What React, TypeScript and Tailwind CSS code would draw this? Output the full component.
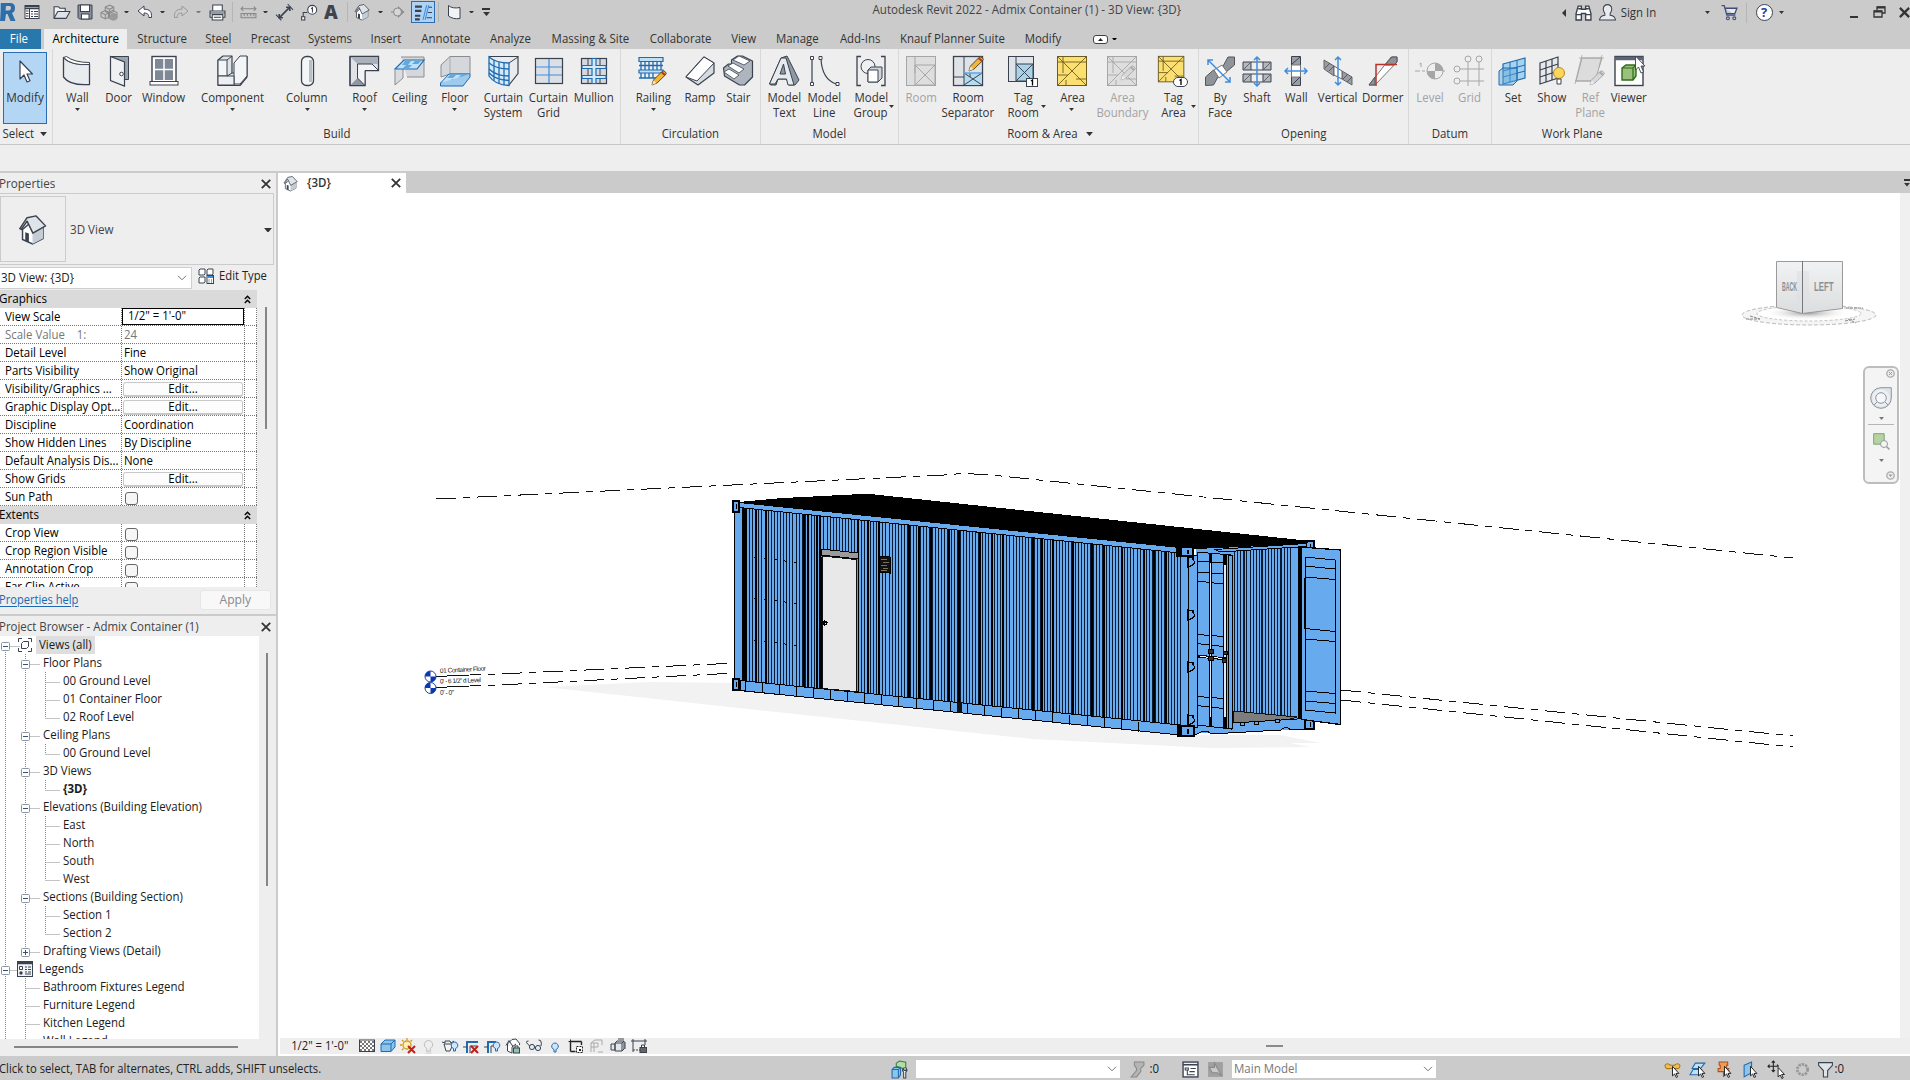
import React from "react";

type Item = [number, number, React.ReactNode];

const K = "#3a4250";
const B = "#1f6bb0";

/* Flow row whose children are centred on given positions along the bar. */
function Row({ items, from = 0, className = "" }: { items: Item[]; from?: number; className?: string }) {
  let cursor = from;
  return (
    <div className={"flex " + className}>
      {items.map(([c, w, node], i) => {
        const ml = c - w / 2 - cursor;
        cursor = c + w / 2;
        return (
          <div key={i} className="flex shrink-0 items-center justify-center whitespace-nowrap" style={{ marginLeft: ml, width: w }}>
            {node}
          </div>
        );
      })}
    </div>
  );
}

function Ico({ s = 32, vb = 32, children }: { s?: number; vb?: number; children: React.ReactNode }) {
  return (
    <svg width={s} height={s} viewBox={`0 0 ${vb} ${vb}`} fill="none" className="shrink-0 overflow-visible">
      {children}
    </svg>
  );
}

const Caret = ({ s = 6, c = "#333" }: { s?: number; c?: string }) => (
  <svg width={s} height={s / 1.7} viewBox="0 0 10 6" className="shrink-0">
    <path d="M0 0h10L5 6z" fill={c} />
  </svg>
);

const XIcon = ({ s = 10, w = 1.8 }: { s?: number; w?: number }) => (
  <svg width={s} height={s} viewBox="0 0 10 10" className="shrink-0">
    <path d="M.8.8l8.4 8.4M9.2.8L.8 9.2" stroke="#333" strokeWidth={w} fill="none" />
  </svg>
);

const Chevron = () => (
  <svg width="10" height="6" viewBox="0 0 10 6" className="shrink-0">
    <path d="M1 .8l4 4 4-4" stroke="#777" fill="none" />
  </svg>
);

const Sep = () => <div className="h-[20px] w-px bg-[#b5b5b5]" />;

/* ---------- quick access icons (16px) ---------- */
const House = ({ s = 16 }: { s?: number }) => (
  <Ico s={s} vb={16}>
    <path d="M2.500 8v5.500L8 16l5.800-3V7L9 2.500z" fill="#fff" stroke={K} strokeWidth=".8" />
    <path d="M8 9.500V16l5.800-3V7z" fill="#c4ccd5" />
    <path d="M1 7.500L5 1.500 10 .5 15.200 6l-7 4L5 3.400 1.800 8z" fill="#dfe4e9" stroke={K} strokeWidth=".8" strokeLinejoin="round" />
    <path d="M4 9.500l2 .7V15l-2-.9z" fill={K} />
  </Ico>
);

const qat: Item[] = [
  [8, 16, <Ico s={20} vb={20}><path d="M3 1h9q5 0 5 5 0 4-3 5l3.500 8h-5L9.500 12H8l-1 7H2z" fill="#2d6da8" /><path d="M8 4h3.500q1.800 0 1.500 2.200-.3 2.300-2.500 2.300H7.500z" fill="#cbcbcb" /><path d="M3 1L1 3v13l1 3z" fill="#7fb0dc" /></Ico>],
  [32, 16, <Ico s={16} vb={16}><rect x="1" y="1.500" width="14" height="13" fill="#fff" stroke={K} /><path d="M1 2.500h14M1 4.500h14" stroke={K} strokeWidth="1.500" /><path d="M5.500 5v9" stroke={K} /><path d="M2 7h2.500M2 9.500h2.500M2 12h2.500M7 7.500h2M10 7.500h4M7 10h2M10 10h4M7 12.500h2M10 12.500h4" stroke={K} /></Ico>],
  [61, 16, <Ico s={17} vb={16}><path d="M1 13.500V2.500h4l1.500 1.500h5v3" fill="#f0f2f4" stroke={K} /><path d="M1 13.500L4.500 7h11.500l-3.500 6.500z" fill="#dfe3e8" stroke={K} strokeLinejoin="round" /></Ico>],
  [85, 16, <Ico s={16} vb={16}><path d="M1 1h14v14H2.500L1 13.500z" fill="#8a919c" stroke={K} /><rect x="3.500" y="1" width="9" height="6.500" fill="#fff" stroke={K} /><rect x="4.500" y="10" width="7.500" height="5" fill="#fff" stroke={K} /></Ico>],
  [109, 16, <Ico s={17} vb={16}><path d="M8 1l4 2v4l-4 2-4-2V3zM4 6l4 2v4l-4 2-4-2V8zM11 6l4 2v5l-4 2-4-2V8z" fill="#c9c9c9" stroke="#8b8b8b" /><circle cx="12" cy="12" r="3.500" fill="#9a9a9a" /><path d="M0 8l4 2v4M4 10l4-2M4 3l4 2 4-2M8 5v4" stroke="#8b8b8b" /></Ico>],
  [126, 6, <Caret s={5} />],
  [145, 16, <Ico s={16} vb={16}><path d="M1 7l6-5v3.200c6 0 8 2.800 7.500 8.300h-2.700c0-3-1-4.500-4.800-4.500V12z" fill="#fff" stroke={K} strokeLinejoin="round" /></Ico>],
  [162, 6, <Caret s={5} />],
  [181, 16, <Ico s={16} vb={16}><path d="M15 7L9 2v3.200C3 5.200 1 8 1.500 13.500h2.700c0-3 1-4.500 4.800-4.500V12z" fill="#ccc" stroke="#999" strokeLinejoin="round" /></Ico>],
  [198, 6, <Caret s={5} c="#777" />],
  [217, 17, <Ico s={17} vb={16}><path d="M3.500 7V1h9v6" fill="#fff" stroke={K} /><path d="M1 6.500h14v6H1z" fill="#f5f5f5" stroke={K} /><path d="M3 10h10v5H3z" fill="#fff" stroke={K} /><path d="M1 8.500h14M4.500 12.500h7" stroke={K} /></Ico>],
  [232, 1, <Sep />],
  [248, 17, <Ico s={17} vb={16}><path d="M1 4.500h14M3 2.500L1 4.500l2 2M13 2.500l2 2-2 2" stroke="#888" /><path d="M1 9h14v4H1zM4 9v2M7 9v2M10 9v2M13 9v2" stroke="#888" fill="#c4c4c4" /></Ico>],
  [265, 6, <Caret s={5} />],
  [284, 16, <Ico s={17} vb={16}><path d="M3 13L13 3M3 9.500V13h3.500M9.500 3H13v3.500" stroke={K} strokeWidth="1.500" /><path d="M0 10l5 5.500M11 0l5 5.500" stroke={K} /></Ico>],
  [308, 16, <Ico s={17} vb={16}><circle cx="11.500" cy="5.500" r="4.200" fill="#fff" stroke={K} /><path d="M3 13V8h4" stroke={K} /><rect x="1.500" y="12" width="3" height="3" fill="#fff" stroke={K} /><path d="M10.500 4.500l1.200-1V8" stroke={K} /></Ico>],
  [331, 16, <span className="font-['Open_Sans',sans-serif] text-[19px] leading-6 font-extrabold text-[#3f444c]">A</span>],
  [347, 1, <Sep />],
  [362, 16, <House s={16} />],
  [380, 6, <Caret s={5} />],
  [398, 16, <Ico s={16} vb={16}><path d="M8 2l6.500 6L8 14z" fill="#8d8d8d" /><circle cx="7.500" cy="8" r="4" fill="#d6d6d6" stroke="#8a8a8a" /><path d="M1 8h2.500" stroke="#8a8a8a" /></Ico>],
  [423, 24, <div className="flex h-[22px] w-6 items-center justify-center border border-[#2a6db5] bg-[#aed3f5]"><Ico s={17} vb={16}><path d="M0 2.500h6.500M0 6.500h6M0 11h5M0 14.500h4.500" stroke={K} strokeWidth="2" /><path d="M7.500 15L11 1M9.500 15L13 1" stroke="#3f8ede" /><path d="M13 3h3M12 8h4M11 13h5" stroke={K} /></Ico></div>],
  [438, 1, <Sep />],
  [454, 16, <Ico s={16} vb={16}><path d="M2.500 1.500q4 3.500 11.500 2v11Q7 15.500 2.500 12z" fill="#f1f3f5" stroke={K} strokeLinejoin="round" /></Ico>],
  [471, 6, <Caret s={5} />],
  [486, 8, <div className="flex flex-col items-center gap-[2px]"><div className="h-[1.5px] w-2 bg-[#333]" /><Caret s={7} /></div>],
];

const account: Item[] = [
  [1564, 5, <svg width="4" height="8" viewBox="0 0 4 8"><path d="M4 0v8L0 4z" fill="#333" /></svg>],
  [1583, 16, <Ico s={17} vb={16}><path d="M3 2h3v3h4V2h3l2 7v6h-5V9H6v6H1V9z" fill="#fff" stroke={K} strokeWidth="1.300" /><path d="M1 10h5M10 10h5M3 4.500h3M10 4.500h3" stroke={K} strokeWidth="1.300" /></Ico>],
  [1607, 16, <Ico s={17} vb={16}><path d="M.5 15q.5-4 5-4.500V9Q4 7 4 4.500 4.500.6 8 .6t4 3.900Q12 7 10.500 9v1.500q4.500.5 5 4.500z" fill="#e9ebee" stroke={K} /></Ico>],
  [1638, 38, <Lbl>Sign In</Lbl>],
  [1707, 6, <Caret s={5} />],
  [1729, 16, <Ico s={17} vb={16}><path d="M.5 1.500h2.500l2.500 9h8M3.800 4H15l-2 5H5" fill="#e6ebf5" stroke="#3e4c78" strokeWidth="1.200" /><circle cx="6.500" cy="13.500" r="1.400" stroke="#3e4c78" /><circle cx="12.500" cy="13.500" r="1.400" stroke="#3e4c78" /></Ico>],
  [1746, 1, <Sep />],
  [1764, 17, <div className="flex size-[17px] items-center justify-center rounded-full border border-[#3a4250] bg-white"><span className="text-[13px] leading-none font-bold text-[#2444a0]">?</span></div>],
  [1781, 6, <Caret s={5} />],
  [1853.500, 9, <div className="mt-[9px] h-[2.5px] w-2 bg-[#333]" />],
  [1879, 13, <Ico s={13} vb={13}><path d="M4 4V1h8v6H9" stroke="#333" strokeWidth="1.300" /><path d="M4 1.500h8M1 5.500h8" stroke="#333" strokeWidth="2" /><path d="M1 5h8v6H1z" stroke="#333" strokeWidth="1.300" /></Ico>],
  [1904.500, 11, <XIcon s={11} w={2} />],
];

function Lbl({ children, className = "scale-x-[.915]" }: { children: React.ReactNode; className?: string }) {
  return <span className={"inline-block whitespace-nowrap " + className}>{children}</span>;
}

/* ---------- ribbon tabs ---------- */
const tabs: Item[] = [
  [20.500, 41, <div className="flex h-5 w-full items-center justify-center bg-[#2878ad] pr-1 text-white"><Lbl>File</Lbl></div>],
  [85.500, 83, <div className="flex h-5 w-full items-center justify-center bg-[#eee] text-black"><Lbl className="scale-x-[.93]">Architecture</Lbl></div>],
  [162, 48, <Lbl>Structure</Lbl>],
  [218.500, 25, <Lbl>Steel</Lbl>],
  [270, 38, <Lbl>Precast</Lbl>],
  [330.500, 43, <Lbl>Systems</Lbl>],
  [386, 28, <Lbl>Insert</Lbl>],
  [445.500, 49, <Lbl>Annotate</Lbl>],
  [510.500, 41, <Lbl>Analyze</Lbl>],
  [590.500, 79, <Lbl>Massing &amp; Site</Lbl>],
  [680.500, 61, <Lbl>Collaborate</Lbl>],
  [743.500, 25, <Lbl>View</Lbl>],
  [797.500, 43, <Lbl>Manage</Lbl>],
  [860, 42, <Lbl>Add-Ins</Lbl>],
  [952.500, 103, <Lbl>Knauf Planner Suite</Lbl>],
  [1043, 38, <Lbl>Modify</Lbl>],
  [1100.500, 15, <div className="flex h-[9px] w-[15px] items-center justify-center rounded-[3px] border border-[#3a4250] bg-white"><svg width="5" height="3" viewBox="0 0 5 3"><path d="M0 3h5L2.500 0z" fill="#222" /></svg></div>],
  [1114.500, 6, <Caret s={5} c="#000" />],
];

/* ---------- ribbon icons ---------- */
const Pencil = ({ x = 0, y = 0, gray = false }: { x?: number; y?: number; gray?: boolean }) => (
  <g transform={`translate(${x} ${y})`}>
    <path d="M1 15l1.500-5L11 1.500Q13 0 14.500 2t0 2.800L6 13z" fill={gray ? "#d8d8d8" : "#f2b632"} stroke={gray ? "#aaa" : "#5b4a2a"} strokeLinejoin="round" />
    <path d="M10.500 2l3.800 3.300" stroke={gray ? "#aaa" : "#a33a2a"} strokeWidth="2" />
    <path d="M1 15l1.500-4.500 3 2.500z" fill={gray ? "#eee" : "#f6e6c8"} />
  </g>
);

const G = "#a6a6a6";
const area = (fill: string, st: string) => (
  <>
    <rect x="1.500" y="1.500" width="29" height="29" fill={fill} stroke={st} />
    <path d="M2 7h28M7 2v16M2 2l28 28M30 2L2 30M2 20h10M20 24h10M10 30v-5" stroke={st} strokeWidth=".9" />
  </>
);

const I: Record<string, React.ReactNode> = {
  modify: <Ico><path d="M11 6v18l4-4 3 7 3-1.300-3-6.700h5.500z" fill="#fff" stroke={K} strokeWidth="1.200" strokeLinejoin="round" /></Ico>,
  wall: <Ico><path d="M2.500 2.500q7 8 26 6.500v20.500Q9 31 2.500 22z" fill="#e9ecef" stroke={K} strokeWidth="1.300" strokeLinejoin="round" /><path d="M2.500 2.500l3-1q8 6 23 6v2q-18 1.500-26-7z" fill="#fff" stroke={K} /></Ico>,
  door: <Ico><path d="M7.500 1.500h18v23h-5" fill="#9ba3ad" stroke={K} /><path d="M7.500 1.500l14 5.500v24l-14-5.500z" fill="#eef0f2" stroke={K} strokeWidth="1.200" /><circle cx="18.500" cy="19" r="1.800" fill="#fff" stroke={K} /></Ico>,
  window: <Ico><rect x="4" y="1.500" width="24" height="26" fill="#fff" stroke={K} strokeWidth="1.400" /><rect x="7" y="4" width="18" height="21" fill="#7e8896" /><path d="M16 4v21M7 14.500h18" stroke="#fff" strokeWidth="1.500" /><rect x="2" y="26.500" width="28" height="3.500" fill="#fff" stroke={K} /></Ico>,
  component: <Ico><path d="M2 5l5-4h9v17h8V6l5-4.500h2V22l-7 8.500H2z" fill="#dfe3e8" stroke={K} strokeWidth="1.200" strokeLinejoin="round" /><path d="M2 5h9v16H2zM18 8l6-7h7v20l-7 8h-6z" fill="#f3f5f6" stroke={K} /><path d="M2 21h16v9H2z" fill="#eceef1" stroke={K} /><path d="M11 5l5-4M11 21l5-3" stroke={K} /></Ico>,
  column: <Ico><rect x="10.500" y="1.500" width="12" height="29" rx="5" fill="#f4f5f7" stroke={K} strokeWidth="1.300" /><path d="M19.500 5v22" stroke="#b7bec8" strokeWidth="3" /></Ico>,
  roof: <Ico><path d="M2 1.500h28.500v14H17v15H2z" fill="#dfe3e8" stroke={K} strokeWidth="1.300" /><path d="M2 1.500L9.500 9l21 0V1.500z" fill="#aab1bb" /><path d="M9.500 9v14L2 30.500h15V15.500h13.500L24 9z" fill="#f2f3f5" /><path d="M9.500 23L2 30.500h15z" fill="#8e97a3" /><path d="M9.500 9H24l6.500 6.500M9.500 9v14l7.500 7.500M2 1.500h28.500v14H17v15H2z" stroke={K} /></Ico>,
  ceiling: <Ico><path d="M2 15v15l8-7V10" fill="#d9dde2" stroke="#8c8c8c" /><path d="M8 2h23v20H14" fill="#d4d8dc" stroke="#8c8c8c" /><path d="M2 14l9-9h20l-7 9z" fill="#bfe1f7" stroke={B} strokeWidth="1.200" /><path d="M12 6h6l-3 4H9zM22 6h6l-3 3h-6zM13 10h6l-3 3h-6z" fill="#5fa8e0" /></Ico>,
  floor: <Ico><path d="M2 22V10L11 1.500h20V19H11z" fill="#d4d8dc" stroke="#8c8c8c" /><path d="M11 2v18" stroke="#aaa" /><path d="M1.500 28L10 19h21l-7 9z" fill="#bfe1f7" stroke={B} /><path d="M11 20h6l-3 3H8zM22 20h6l-3 3h-6zM13 24h7l-3 3h-7z" fill="#5fa8e0" /><path d="M1.500 28v3H24l7-9v-3" fill="#9ccbee" stroke={B} /></Ico>,
  csystem: <Ico><path d="M2 1.500h29v17L22 30" fill="#e9ebee" stroke={K} strokeWidth="1.200" /><path d="M2 2q7 6 20 6v22.500Q8 30 2 21z" fill="#d3eafa" stroke={B} strokeWidth="1.300" /><path d="M2 8q7 6 20 6M2 14q7 7 20 7M7 5v21M12 7v22M17 8v22M2 18q7 7 20 7.500" stroke={B} strokeWidth="1.300" /><path d="M22 8l9-6" stroke={K} /></Ico>,
  cgrid: <Ico><rect x="2.500" y="3.500" width="27" height="25" fill="#dcdfe4" stroke={K} strokeWidth="1.200" /><path d="M16 4v24M3 12h26M3 20h26" stroke="#3f8ede" strokeWidth="1.200" /></Ico>,
  mullion: <Ico><rect x="3.500" y="3.500" width="25" height="25" fill="#d5d9df" stroke={K} strokeWidth="1.200" /><path d="M10 4v24M22 4v24" stroke={K} /><path d="M14 3.500h4v7h10v3H18v7h10v3H18v5h-4v-5H4v-3h10v-7H4v-3h10z" fill="#d3eafa" stroke={B} strokeWidth="1.200" /></Ico>,
  railing: <Ico><path d="M2 2.500h24v4H2zM2 15h24v3H2z" fill="#bfe1f7" stroke={B} strokeWidth="1.200" /><path d="M4 6v9M8 6v9M12 6v9M16 6v9M20 6v9M24 6v9M2 10.500h24M2 23h18M4 18v5M8 18v5M12 18v5M16 18v5" stroke={B} strokeWidth="1.300" /><Pencil x={14} y={15} /></Ico>,
  ramp: <Ico><path d="M2 22L20 2l10 6v10L14 30z" fill="#d7dbe0" stroke={K} strokeWidth="1.200" strokeLinejoin="round" /><path d="M2 22L20 2l10 6-17 18z" fill="#fff" stroke={K} /></Ico>,
  stair: <Ico><path d="M1.500 13l5-4h3l0-4 6-4h5l10 5v16l-8 8h-5l-15-9z" fill="#aeb5bf" stroke={K} strokeWidth="1.200" strokeLinejoin="round" /><path d="M11 5l6-4 11 5-6 4zM6 11l5-3 11 6-5 4zM2 17l5-3 10 6-5 4z" fill="#fff" stroke={K} strokeWidth=".8" /></Ico>,
  mtext: <Ico><path d="M1.500 29L13 3l6-2 12 24-4 5h-6l-2.500-6H10l-2 6H3z" fill="#8f98a5" stroke={K} strokeLinejoin="round" /><path d="M1.500 29L13 3h5l8 27h-6l-1.500-6H10l-3 5zM12 19h5.500L15.500 9z" fill="#e8ebee" stroke={K} fillRule="evenodd" /></Ico>,
  mline: <Ico><path d="M4 4v24M13 4q1 20 15 25" stroke={K} strokeWidth="1.200" /><path d="M2.500 1.500h3v3h-3zM2.500 27.500h3v3h-3zM11 1.500h3v3h-3zM28 27.500h3v3h-3z" fill="#fff" stroke={K} /></Ico>,
  mgroup: <Ico><path d="M6 1.500H2v29h4M26 1.500h4v29h-4" stroke={K} strokeWidth="1.300" /><circle cx="13" cy="11.500" r="7" fill="#eef0f2" stroke={K} /><path d="M13 15l3-3h11v11l-4 4H13z" fill="#cfd4db" stroke={K} /><path d="M13 15h10v12H13z" fill="#fff" stroke={K} /></Ico>,
  room: <Ico><rect x="1.500" y="1.500" width="29" height="29" fill="#dedede" stroke={G} /><path d="M10 10h20v20H10zM10 2v16M10 10l20 20M30 10L10 30" stroke={G} /></Ico>,
  roomsep: <Ico><rect x="1.500" y="1.500" width="29" height="29" fill="#dfe3e8" stroke={K} strokeWidth="1.300" /><path d="M12 18h18v12H12z" fill="#b4dbef" /><path d="M12 2v28M2 22h10M12 18l18 12M30 18L12 30M18 22v-4" stroke={K} /><path d="M12 18h18" stroke="#5fa8e0" strokeWidth="1.500" /><Pencil x={16} y={1} /></Ico>,
  tagroom: <Ico><rect x="1.500" y="1.500" width="25" height="25" fill="#dfe3e8" stroke={K} /><path d="M9 9h17v17H9z" fill="#a8d3ea" stroke={K} /><path d="M9 2v7M9 9l17 17M26 9L9 26" stroke={K} /><rect x="19.500" y="23.500" width="11" height="8" fill="#fff" stroke={K} /><path d="M24 26l1.500-1v5.500" stroke="#000" strokeWidth="1.300" /></Ico>,
  area: <Ico>{area("#fbdf70", "#6d5c1c")}</Ico>,
  areab: <Ico>{area("#dedede", G)}<Pencil x={14} y={10} gray /></Ico>,
  tagarea: <Ico><g transform="scale(.88)">{area("#fbdf70", "#5d4f1c")}</g><rect x="16.500" y="22.500" width="14" height="9" rx="4.500" fill="#fff" stroke={K} /><path d="M22.500 25.500l1.500-1v5.500" stroke="#000" strokeWidth="1.300" /></Ico>,
  byface: <Ico><path d="M1.500 30.500V22l8-7 5 6-5 9zM18 13l6-11h6.500v8L22 17z" fill="#8f949b" stroke="#555" /><path d="M10 15l8-5 5 7-8 6z" fill="#fff" stroke="#777" /><path d="M4 5l22 22M4 10V5h5M26 22v5h-5" stroke="#3f8ede" strokeWidth="1.500" /></Ico>,
  shaft: <Ico><path d="M2 7h8v8H2zM22 7h8v8h-8zM2 19h8v8H2zM22 19h8v8h-8z" fill="#b4b7bb" stroke={K} /><path d="M3 14l6-6M3 26l6-6M23 14l6-6M23 26l6-6" stroke={K} strokeWidth=".7" /><path d="M10 7h12M10 15h12M10 19h12M10 27h12" stroke={K} /><path d="M16 2v29M13 5l3-3 3 3M13 28l3 3 3-3" stroke="#3f8ede" strokeWidth="1.500" /></Ico>,
  owall: <Ico><path d="M11.500 1.500h9v9h-9zM11.500 21.500h9v9h-9z" fill="#9a9da2" stroke={K} /><path d="M11.500 10h9v12h-9z" fill="#fff" stroke="#777" /><path d="M12 9l8-7M12 30l8-8" stroke={K} /><path d="M5 16h22M8 13l-3 3 3 3M24 13l3 3-3 3" stroke="#3f8ede" strokeWidth="1.500" /></Ico>,
  vertical: <Ico><path d="M2 5l10 6v10L2 14zM20 16l10 6v8l-10-6z" fill="#9a9da2" stroke="#666" /><path d="M12 11l8 5v8l-8-4z" fill="#fff" stroke="#666" /><path d="M3 13l5-5M7 16l5-5M21 24l5-5M25 27l5-5" stroke={K} strokeWidth=".7" /><path d="M16 2v28M13 5l3-3 3 3M13 27l3 3 3-3" stroke="#3f8ede" strokeWidth="1.500" /></Ico>,
  dormer: <Ico><path d="M2 30L24 2h6v5L8 30z" fill="#fff" stroke="#777" /><path d="M2 30l6-8v8zM18 10l7-8h5v5l-3 3z" fill="#8f9399" stroke="#555" /><path d="M30 9.500H9V31" stroke="#b5332c" strokeWidth="1.500" /></Ico>,
  level: <Ico><path d="M1 16h5M8 16h3M13 16h18M7 12V8l-1.500 1" stroke={G} /><circle cx="21" cy="16" r="8" fill="#eee" stroke={G} /><path d="M21 8v8h8a8 8 0 0 0-8-8zM21 24v-8h-8a8 8 0 0 0 8 8z" fill={G} /></Ico>,
  grid: <Ico><path d="M15 7v24M26 7v24M7 14h24M7 26h24" stroke={G} /><circle cx="15" cy="4" r="3" fill="#eee" stroke={G} /><circle cx="26" cy="4" r="3" fill="#eee" stroke={G} /><circle cx="4" cy="14" r="3" fill="#eee" stroke={G} /><circle cx="4" cy="26" r="3" fill="#eee" stroke={G} /></Ico>,
  set: <Ico><path d="M6 9l22-6v20L6 29z" fill="#a8d3ef" stroke={B} strokeWidth="1.200" /><path d="M13 7v20M20 5v20M6 16l22-6M6 22l22-6" stroke={B} /><path d="M2 16l4-3h14v13l-4 4H2z" fill="#5fa8d8" fillOpacity=".45" stroke={B} /></Ico>,
  show: <Ico><path d="M4 8l18-6v21L4 29z" fill="#e6e8ea" stroke={K} strokeWidth="1.200" /><path d="M10 6v21M16 4v21M4 15l18-6M4 22l18-6" stroke={K} strokeWidth="1.200" /><circle cx="23" cy="18" r="5.500" fill="#fcd65a" stroke="#b88a1c" /><path d="M21 24h4v5h-4z" fill="#fff" stroke={K} /></Ico>,
  refplane: <Ico><path d="M8 3h20L21 26H2z" fill="#dcdcdc" stroke={G} /><path d="M5 3h25M8 0L1 29M28 0l-3 12M1 26h20" stroke={G} strokeWidth=".8" /><Pencil x={15} y={15} gray /></Ico>,
  viewer: <Ico><rect x="2" y="1.500" width="28" height="29" fill="#fff" stroke={K} strokeWidth="1.400" /><path d="M2 3.500h28" stroke="#5d6475" strokeWidth="3.500" /><path d="M9 13l4-3h10v11l-3 4H9z" fill="#9ac07c" stroke="#2c6d1a" strokeWidth="1.400" /><path d="M9 13h11v12M20 13l3-3" stroke="#2c6d1a" strokeWidth="1.200" /><path d="M22.500 1v14l3-3 2.500 6 2.500-1-2.500-6h4z" fill="#fff" stroke={K} strokeWidth=".9" /></Ico>,
};

type Btn = { c: number; icon: string; l: string; l2?: string; arrow?: boolean; side?: boolean; off?: boolean };
type PanelDef = { from: number; to: number; title: string; more?: boolean; last?: boolean; btns: Btn[] };

const panels: PanelDef[] = [
  { from: 53, to: 621, title: "Build", btns: [
    { c: 77, icon: "wall", l: "Wall", arrow: true }, { c: 119, icon: "door", l: "Door" }, { c: 164, icon: "window", l: "Window" },
    { c: 232, icon: "component", l: "Component", arrow: true }, { c: 307, icon: "column", l: "Column", arrow: true },
    { c: 364, icon: "roof", l: "Roof", arrow: true }, { c: 409, icon: "ceiling", l: "Ceiling" }, { c: 455, icon: "floor", l: "Floor", arrow: true },
    { c: 503, icon: "csystem", l: "Curtain", l2: "System" }, { c: 548.500, icon: "cgrid", l: "Curtain", l2: "Grid" }, { c: 594, icon: "mullion", l: "Mullion" }] },
  { from: 621, to: 761, title: "Circulation", btns: [
    { c: 653, icon: "railing", l: "Railing", arrow: true }, { c: 700, icon: "ramp", l: "Ramp" }, { c: 738, icon: "stair", l: "Stair" }] },
  { from: 761, to: 899, title: "Model", btns: [
    { c: 784, icon: "mtext", l: "Model", l2: "Text" }, { c: 824, icon: "mline", l: "Model", l2: "Line" }, { c: 871, icon: "mgroup", l: "Model", l2: "Group", side: true }] },
  { from: 899, to: 1199, title: "Room & Area", more: true, btns: [
    { c: 921, icon: "room", l: "Room", off: true }, { c: 968, icon: "roomsep", l: "Room", l2: "Separator" }, { c: 1023, icon: "tagroom", l: "Tag", l2: "Room", side: true },
    { c: 1072, icon: "area", l: "Area", arrow: true }, { c: 1122, icon: "areab", l: "Area", l2: "Boundary", off: true }, { c: 1173, icon: "tagarea", l: "Tag", l2: "Area", side: true }] },
  { from: 1199, to: 1409, title: "Opening", btns: [
    { c: 1220, icon: "byface", l: "By", l2: "Face" }, { c: 1257, icon: "shaft", l: "Shaft" }, { c: 1296, icon: "owall", l: "Wall" },
    { c: 1338, icon: "vertical", l: "Vertical" }, { c: 1383, icon: "dormer", l: "Dormer" }] },
  { from: 1409, to: 1492, title: "Datum", btns: [
    { c: 1430, icon: "level", l: "Level", off: true }, { c: 1469, icon: "grid", l: "Grid", off: true }] },
  { from: 1492, to: 1653, title: "Work Plane", last: true, btns: [
    { c: 1513, icon: "set", l: "Set" }, { c: 1552, icon: "show", l: "Show" }, { c: 1590, icon: "refplane", l: "Ref", l2: "Plane", off: true }, { c: 1629, icon: "viewer", l: "Viewer" }] },
];

function RibbonButton({ b }: { b: Btn }) {
  return (
    <div className={"relative flex h-[78px] flex-col items-center " + (b.off ? "text-[#a3a3a3]" : "text-[#333]")}>
      {I[b.icon]}
      <div className="mt-[3px] flex flex-col items-center leading-[15px]">
        <Lbl>{b.l}</Lbl>
        {b.l2 && <Lbl>{b.l2}</Lbl>}
        {b.arrow && <div className="mt-[3px] flex h-1"><Caret s={5} /></div>}
      </div>
      {b.side && <div className="absolute top-[50px] left-[calc(50%+18px)] flex"><Caret s={5} /></div>}
    </div>
  );
}

function Ribbon() {
  return (
    <div className="flex h-24 shrink-0 border-b border-[#c6c6c6] bg-[#eee] text-[#333]">
      <div className="flex w-[53px] shrink-0 flex-col border-r border-[#d8d8d8] pt-[3px]">
        <div className="ml-[3px] flex h-[72px] w-11 flex-col items-center border border-[#2a6db5] bg-[#b4d6f5]">
          <div className="pt-0.5">{I.modify}</div>
          <Lbl className="mt-[3px] scale-x-[.94] leading-[15px]">Modify</Lbl>
        </div>
        <div className="mt-[3px] flex items-center gap-1 pl-px leading-[14px]"><Lbl>Select</Lbl><Caret s={7} /></div>
      </div>
      {panels.map((p) => (
        <div key={p.title} className={"flex shrink-0 flex-col pt-1.5 " + (p.last ? "" : "border-r border-[#d8d8d8]")} style={{ width: p.to - p.from }}>
          <Row from={p.from} items={p.btns.map((b) => [b.c, 36, <RibbonButton key={b.c} b={b} />] as Item)} className="h-[72px] items-start" />
          <div className="flex items-center justify-center gap-1.5 leading-[14px]"><Lbl>{p.title}</Lbl>{p.more && <Caret s={7} />}</div>
        </div>
      ))}
    </div>
  );
}

/* ---------- properties palette ---------- */
type Prop = { n: string; v?: string; kind?: "edit" | "check" | "input" | "head"; off?: boolean };
const props: Prop[] = [
  { n: "Graphics", kind: "head" },
  { n: "View Scale", v: "1/2\" = 1'-0\"", kind: "input" },
  { n: "Scale Value    1:", v: "24", off: true },
  { n: "Detail Level", v: "Fine" },
  { n: "Parts Visibility", v: "Show Original" },
  { n: "Visibility/Graphics ...", kind: "edit" },
  { n: "Graphic Display Opt...", kind: "edit" },
  { n: "Discipline", v: "Coordination" },
  { n: "Show Hidden Lines", v: "By Discipline" },
  { n: "Default Analysis Dis...", v: "None" },
  { n: "Show Grids", kind: "edit" },
  { n: "Sun Path", kind: "check" },
  { n: "Extents", kind: "head" },
  { n: "Crop View", kind: "check" },
  { n: "Crop Region Visible", kind: "check" },
  { n: "Annotation Crop", kind: "check" },
  { n: "Far Clip Active", kind: "check" },
];

function PropRow({ p }: { p: Prop }) {
  if (p.kind === "head")
    return (
      <div className="flex h-[18px] items-center justify-between bg-[#dadada] pr-1.5 text-black">
        <Lbl className="-ml-px origin-left scale-x-[.93]">{p.n}</Lbl>
        <svg width="7" height="9" viewBox="0 0 7 9"><path d="M.8 4l2.700-2.700L6.200 4M.8 8l2.700-2.700L6.200 8" stroke="#000" strokeWidth="1.400" fill="none" /></svg>
      </div>
    );
  return (
    <div className={"flex h-[18px] border-b border-dotted border-[#777] " + (p.off ? "text-[#777]" : "text-black")}>
      <div className="flex w-[122px] items-center border-r border-dotted border-[#777] pl-[5px]"><Lbl className="origin-left scale-x-[.915] whitespace-pre">{p.n}</Lbl></div>
      <div className="flex w-[123px] items-center border-r border-dotted border-[#777]">
        {p.kind === "input" && <div className="flex h-[17px] w-full items-center border border-black pl-[5px] leading-none"><Lbl className="origin-left scale-x-[.915]">{p.v}</Lbl></div>}
        {p.kind === "edit" && <div className="mt-px ml-px flex h-[15px] w-[120px] items-center justify-center rounded-[3px] border border-b-2 border-[#c8c8c8] bg-[#fdfdfd] pt-px leading-none"><Lbl>Edit...</Lbl></div>}
        {p.kind === "check" && <div className="mt-[3px] ml-[3px] size-[13px] rounded-[3px] border border-[#666] bg-[#f6f6f6]" />}
        {!p.kind && <Lbl className="ml-0.5 origin-left scale-x-[.915]">{p.v}</Lbl>}
      </div>
      <div className="w-3 border-r border-dotted border-[#777]" />
    </div>
  );
}

function Properties() {
  return (
    <div className="flex h-[443px] shrink-0 flex-col border-b-2 border-[#cbcbcb]">
      <div className="flex h-5 items-center justify-between pt-0.5 pr-[5px] text-[#444]"><Lbl className="-ml-px origin-left scale-x-[.93]">Properties</Lbl><XIcon /></div>
      <div className="flex h-[72px] w-[274px] items-center border border-l-0 border-[#cbcbcb] pr-px">
        <div className="flex size-[66px] items-center justify-center border border-[#cbcbcb] pr-0.5"><House s={29} /></div>
        <Lbl className="ml-1 origin-left scale-x-[.93] pt-0.5 text-[#444]">3D View</Lbl>
        <div className="ml-auto flex pt-0.5"><Caret s={8} /></div>
      </div>
      <div className="mt-0.5 flex h-[23px] shrink-0">
        <div className="flex h-[22px] w-48 items-center justify-between border border-l-0 border-[#cfcfcf] bg-white pr-1 pl-px text-[#222]"><Lbl className="origin-left scale-x-[.925]">3D View: {"{3D}"}</Lbl><Chevron /></div>
        <div className="-mt-0.5 ml-1.5 flex h-[22px] items-center gap-[5px]">
          <Ico s={16} vb={16}><path d="M1 2l1-1h5v5L6 7H1zM9 2l1-1h5v5l-1 1H9zM1 10l1-1h5v5l-1 1H1z" fill="#fff" stroke={K} /><rect x="9" y="7.500" width="6.500" height="8" fill="#fff" stroke={K} /><path d="M9.500 9h5.500" stroke="#3f8ede" strokeWidth="2" /><path d="M10.500 12h1M13 12h1M10.500 14h1M13 14h1" stroke={K} /></Ico>
          <Lbl className="origin-left scale-x-[.9] text-[#222]">Edit Type</Lbl>
        </div>
      </div>
      <div className="flex h-[297px] shrink-0 overflow-hidden">
        <div className="h-[320px] w-[257px] shrink-0 bg-white">{props.map((p) => <PropRow key={p.n} p={p} />)}</div>
        <div className="mt-[17px] ml-2 h-[122px] w-0.5 bg-[#868686]" />
      </div>
      <div className="flex items-center justify-between pt-[3px] pr-[5px]">
        <Lbl className="-ml-px origin-left scale-x-[.89] text-[#1b68b3] underline underline-offset-2">Properties help</Lbl>
        <div className="flex h-5 w-[71px] items-center justify-center rounded-[3px] border border-[#e6e6e6] bg-[#f8f8f8] text-[#8a8a8a]"><Lbl className="scale-x-[.97]">Apply</Lbl></div>
      </div>
    </div>
  );
}

/* ---------- project browser ---------- */
type Node = { d: number; l: string; box?: "-" | "+"; last?: boolean; bold?: boolean; icon?: "views" | "legend" };
const tree: Node[] = [
  { d: 0, l: "Views (all)", box: "-", icon: "views" },
  { d: 1, l: "Floor Plans", box: "-" }, { d: 2, l: "00 Ground Level" }, { d: 2, l: "01 Container Floor" }, { d: 2, l: "02 Roof Level", last: true },
  { d: 1, l: "Ceiling Plans", box: "-" }, { d: 2, l: "00 Ground Level", last: true },
  { d: 1, l: "3D Views", box: "-" }, { d: 2, l: "{3D}", bold: true, last: true },
  { d: 1, l: "Elevations (Building Elevation)", box: "-" }, { d: 2, l: "East" }, { d: 2, l: "North" }, { d: 2, l: "South" }, { d: 2, l: "West", last: true },
  { d: 1, l: "Sections (Building Section)", box: "-" }, { d: 2, l: "Section 1" }, { d: 2, l: "Section 2", last: true },
  { d: 1, l: "Drafting Views (Detail)", box: "+", last: true },
  { d: 0, l: "Legends", box: "-", icon: "legend" },
  { d: 1, l: "Bathroom Fixtures Legend" }, { d: 1, l: "Furniture Legend" }, { d: 1, l: "Kitchen Legend" }, { d: 1, l: "Wall Legend" },
];

function Guide({ half = false, stub = false, box, top = true }: { half?: boolean; stub?: boolean; box?: "-" | "+"; top?: boolean }) {
  return (
    <svg width="20" height="18" viewBox="0 0 20 18" className="shrink-0">
      <path d={`M5.500 ${top ? 0 : 10}V${half ? 10 : 18}`} stroke="#888" strokeDasharray="1 1" />
      {stub && <path d="M5.500 10.500H20" stroke="#888" strokeDasharray="1 1" />}
      {box && (
        <g transform="translate(1 6)">
          <rect x=".5" y=".5" width="8" height="8" rx="1" fill="#fff" stroke="#8c96a3" />
          <path d={box === "-" ? "M2 4.500h5" : "M2 4.500h5M4.500 2v5"} stroke="#33507c" />
        </g>
      )}
    </svg>
  );
}

function Browser() {
  return (
    <div className="flex flex-1 flex-col overflow-hidden">
      <div className="flex h-5 shrink-0 items-center justify-between pt-0.5 pr-[5px] text-[#444]"><Lbl className="-ml-px origin-left scale-x-[.915]">Project Browser - Admix Container (1)</Lbl><XIcon /></div>
      <div className="flex h-[403px] shrink-0 overflow-hidden">
        <div className="h-[430px] w-[259px] shrink-0 bg-white text-[#1a1a1a]">
          {tree.map((n, i) => (
            <div key={i} className="flex h-[18px] items-center">
              {n.d === 0 && (
                <>
                  <Guide stub box={n.box} top={i > 0} />
                  <div className="-ml-1 flex w-[18px] justify-center">
                    {n.icon === "views" ? (
                      <Ico s={14} vb={14}><path d="M4 .5H.5V4M10 .5h3.500V4M4 13.500H.5V10M10 13.500h3.500V10" stroke={K} /><path d="M3.500 5.500l2-2h5v5l-2 2h-5z" fill="#fff" stroke={K} /></Ico>
                    ) : (
                      <Ico s={16} vb={16}><rect x=".5" y=".5" width="15" height="15" fill="#f2f3f5" stroke={K} /><path d="M.5 2h15" stroke={K} strokeWidth="2.500" /><path d="M2.500 5.500h3v3h-3z" fill="#fff" stroke={K} /><circle cx="4" cy="12" r="1.700" fill={K} /><path d="M8 6h2M11 6h3M8 8.500h2M11 8.500h3M8 11h2M11 11h3M8 13h6" stroke={K} /></Ico>
                    )}
                  </div>
                  <div className={"ml-0.5 flex h-[18px] w-[59px] items-center pl-[3px] " + (i === 0 ? "bg-[#dedede]" : "")}><Lbl className="origin-left scale-x-[.92]">{n.l}</Lbl></div>
                </>
              )}
              {n.d > 0 && (
                <>
                  <Guide />
                  {n.d === 1 ? <Guide stub box={n.box} half={n.last} /> : <><Guide /><Guide stub half={n.last} /></>}
                  <Lbl className={"ml-[3px] origin-left scale-x-[.917] " + (n.bold ? "font-bold" : "")}>{n.l}</Lbl>
                </>
              )}
            </div>
          ))}
        </div>
        <div className="mt-[17px] ml-[7px] h-[233px] w-0.5 bg-[#868686]" />
      </div>
      <div className="mt-[7px] ml-3.5 h-0.5 w-56 shrink-0 bg-[#868686]" />
    </div>
  );
}

/* ---------- model view ---------- */
const topY = (x: number) => 503.5 + (x - 740) * 0.1022;
const botY = (x: number) => 680 + (x - 740) * 0.102;
const thin = Array.from({ length: 140 }, (_, i) => 749.500 + i * 3.1).filter((x) => x < 1187);
const thick = [743.500, 746, 756, 766, 804, 807.500, 817, 820, 858, 868, 878.500, 908.500, 918.500, 930.500, 949, 958.500, 980, 991.500, 1003, 1032.500, 1042, 1053, 1072.500, 1091.500, 1104, 1122, 1144, 1154, 1165.500];
const rear = Array.from({ length: 19 }, (_, i) => 1234.500 + i * 3.1);
const DASH = "20 7 7 7";

function Model() {
  return (
    <svg width="1622" height="845" viewBox="278 193 1622 845" fill="none" className="block">
      <path d="M545 687L650 682l85 1v7l445 45 100 0 40 8-30 0 20 4-100 1-177-9L720 706z" fill="#f2f2f2" />
      <g stroke="#111" shapeRendering="crispEdges">
        <path d="M436 499L944 475l18-1.500 24 1L1793 558" strokeDasharray={DASH} />
        <path d="M436 676.500l45-2M436 687.500l45-2" />
        <path d="M488 674.500L727 663.500M488 685.500L727 673.500" strokeDasharray="7 7 20 7" />
        <path d="M1341 690L1793 736M1341 700L1793 747" strokeDasharray={DASH} />
      </g>
      {[676.500, 688].map((y) => (
        <g key={y}>
          <circle cx="430.500" cy={y} r="5.500" fill="#fff" stroke="#1c3f9c" />
          <path d={`M430.500 ${y}v-5.500a5.500 5.500 0 0 0-5.500 5.500zM430.500 ${y}v5.500a5.500 5.500 0 0 0 5.500-5.500z`} fill="#0a38b0" />
        </g>
      ))}
      <g fill="#222" className="font-['Liberation_Sans',sans-serif] text-[6.5px]">
        <text x="440" y="673" textLength="46" transform="rotate(-3 440 672)">01 Container Floor</text>
        <text x="440" y="683.500" textLength="41" transform="rotate(-2 440 683)">0' - 6 1/2" d Level</text>
        <text x="440" y="695" textLength="14">0' - 0"</text>
      </g>

      <g shapeRendering="crispEdges">
        {/* long side */}
        <path d="M734 502L1189 549V735L734 690z" fill="#67abee" stroke="#000" />
        {thin.map((x) => (
          <path key={x} d={`M${x} ${topY(x) + 4}V${botY(x)}`} stroke="#0a1a30" />
        ))}
        {thick.map((x) => (
          <path key={x} d={`M${x} ${topY(x) + 4}V${botY(x)}`} stroke="#000" strokeWidth="2" />
        ))}
        <path d="M734 507h8v173h-8z" fill="#67abee" stroke="#000" />
        {[556, 597, 639].map((y) => (
          <path key={y} d={`M744 ${y}L797 ${y + 6.500}`} stroke="#000" strokeDasharray="3 7" />
        ))}
        {/* bottom rail */}
        <path d="M740 680.500L1180 725v10L740 690.500z" fill="#67abee" stroke="#000" />
        {Array.from({ length: 24 }, (_, i) => 745 + i * 17.100).map((x) => (
          <path key={x} d={`M${x} ${botY(x) + 1}v10`} stroke="#000" />
        ))}
        <path d="M957 702h5v11h-5z" fill="#111" />
        {/* personnel door */}
        <path d="M821 549l37 4v6l-37-4z" fill="#9b9b9b" stroke="#000" />
        <path d="M822 556l34 3.500v132l-34-3z" fill="#e8e8e8" stroke="#111" />
        <path d="M857 559v132" stroke="#9b8f86" strokeWidth="1" />
        <path d="M821 622.500h7M824.500 620v6" stroke="#000" strokeWidth="1.500" />
        <path d="M823 621.500h3v3h-3z" stroke="#000" />
        <path d="M820.500 557v131" stroke="#000" strokeWidth="2" />
        {/* vent */}
        <path d="M879 556l11 1v16l-11-1z" fill="#111" stroke="#000" />
        <path d="M881 559h6M883 562h6M881 565h6M883 568h5M881 570.500h6" stroke="#a59c8a" strokeWidth=".7" />

        {/* open end */}
        <path d="M1196 548L1313 541v188L1193 733z" fill="#67abee" />
        <path d="M1233 551L1301 547v164l-68-1z" fill="#67abee" />
        {rear.map((x, i) => (
          <path key={x} d={`M${x} ${551 - i * 0.2}V${712 + i * 0.3}`} stroke="#0a1a30" strokeWidth={i % 6 === 3 ? 2 : 1} />
        ))}
        <path d="M1233 711l64 6-10 3-54 3z" fill="#7d7d7d" stroke="#111" />
        <path d="M1300 545v175" stroke="#000" strokeWidth="4" />
        <path d="M1193 726l40-3 80-5v11l-22 1q-6-5-10 0l-70 4q-5-6-14 0h-4z" fill="#67abee" stroke="#000" />
        <path d="M1240 722h4v3h-4zM1254 721h4v3h-4zM1275 719h4v3h-4z" fill="#67abee" stroke="#000" />
        <path d="M1306 541h8v12h-8zM1305 719h9v10h-9z" fill="#67abee" stroke="#000" strokeWidth="1.500" />
        <path d="M1310 544v5M1310 722v5" stroke="#000" />
        {/* roof and top rail */}
        <path d="M738 502L783 498l79-4h8l440 47-4 3-110 5-6 1-14-2z" fill="#000" />
        <path d="M739 503L1180 548v5L739 507.500z" fill="#67abee" />
        <path d="M739 507.500L1180 553" stroke="#000" />
        <path d="M1215 549.500L1306 543.500v3L1220 552z" fill="#67abee" stroke="#000" />
        <path d="M733 501h6v11h-6zM733 679h6v11h-6z" fill="#67abee" stroke="#000" strokeWidth="1.500" />
        <path d="M736 504v5M736 682v5" stroke="#000" />
        {/* corner post */}
        <path d="M1188 555h9v172h-9z" fill="#67abee" stroke="#000" />
        {[561, 614, 666, 719].map((y) => (
          <path key={y} d={`M1188 ${y - 4}l5 1v2l2 2-2 3-5 2z`} fill="#67abee" stroke="#000" strokeWidth="1.300" />
        ))}
        <path d="M1177 547h16v9h-16zM1178 726h16v10h-16z" fill="#67abee" stroke="#000" strokeWidth="1.300" />
        <path d="M1179 548v8M1181 548v8M1188 550v4M1179 727v8M1181 727v8M1188 729v5" stroke="#000" strokeWidth="1.500" />
        {/* folded leaf */}
        <path d="M1197 552l34 3v174l-34-4z" fill="#67abee" stroke="#000" />
        {[572, 634.500, 696.500].map((y) => (
          <path key={y} d={`M1223 ${y + 2}L1197 ${y}v9l26 3`} stroke="#000" />
        ))}
        <path d="M1197 561l26 2" stroke="#000" />
        <path d="M1210.500 553v174" stroke="#000" strokeWidth="3" />
        <path d="M1210.500 563v154" stroke="#dde8f5" strokeWidth="1" />
        <path d="M1225 555v173" stroke="#000" strokeWidth="4" />
        <path d="M1225 565v152" stroke="#dde8f5" strokeWidth="2" />
        <path d="M1228 555h4v173h-4z" fill="#67abee" stroke="#000" />
        <path d="M1198 656l28 3" stroke="#000" strokeWidth="3" />
        <path d="M1200 656.500l24 2" stroke="#fff" />
        <path d="M1208 649h5v4h-5zM1208 656h5v4h-5zM1223 651h4v3h-4zM1222 658h4v4h-4z" fill="#333" stroke="#000" />
        {/* open leaf */}
        <path d="M1301 547l39.500 3v174.500l-39-5z" fill="#67abee" stroke="#000" strokeWidth="1.300" />
        <path d="M1305 557l30 3v153l-30-3zM1305 566l30 3M1305 577l30 2.500M1305 628.500l30 3M1305 639l30 2.500M1305 691l30 2.500M1305 701l30 2.500" stroke="#000" />
        <path d="M1305 577.500v51" stroke="#000" strokeWidth="1.500" />
      </g>

      {/* view cube */}
      <defs>
        <radialGradient id="cubeShadow"><stop offset="0" stopColor="#999" /><stop offset="1" stopColor="#fff" stopOpacity="0" /></radialGradient>
        <linearGradient id="cubeFace" x1="0" y1="0" x2="0" y2="1"><stop offset="0" stopColor="#f1f2f3" /><stop offset="1" stopColor="#dcdddf" /></linearGradient>
      </defs>
      <ellipse cx="1809" cy="315" rx="67" ry="10" fill="#f5f5f5" stroke="#bbb" strokeDasharray="4 2" />
      <ellipse cx="1809" cy="313.500" rx="52" ry="7.500" fill="#fff" stroke="#c4c4c4" strokeDasharray="3 2" />
      <ellipse cx="1807" cy="313" rx="44" ry="7" fill="url(#cubeShadow)" />
      <path d="M1746 319h14M1750 316l10 3M1845 321l10-2M1848 319l8 4M1846 308h17" stroke="#888" strokeDasharray="3 1" />
      <path d="M1776.500 261.500h26v52l-26-6z" fill="url(#cubeFace)" stroke="#9a9a9a" />
      <path d="M1802.500 261.500h40v47l-40 5z" fill="url(#cubeFace)" stroke="#9a9a9a" />
      <path d="M1797 271h12v32h-12z" fill="#dde0e3" fillOpacity=".6" />
      <path d="M1802.500 261v52" stroke="#777" />
      <g fill="#8c8f92" className="font-['Liberation_Sans',sans-serif] font-bold">
        <text transform="translate(1782 291) scale(.4 1)" fontSize="13">BACK</text>
        <text transform="translate(1814 291) scale(.58 1)" fontSize="13.500">LEFT</text>
      </g>
    </svg>
  );
}

function NavBar() {
  return (
    <div className="absolute top-[173px] right-[11px] flex h-[118px] w-9 flex-col items-center rounded-md border-2 border-[#bdbdbd] bg-[#f4f4f4]">
      <div className="flex w-full justify-end pt-px pr-0.5"><Ico s={9} vb={9}><circle cx="4.500" cy="4.500" r="3.700" fill="#eee" stroke="#aaa" strokeWidth="1.300" /><path d="M3 3l3 3M6 3L3 6" stroke="#999" /></Ico></div>
      <div className="mt-[9px]"><Ico s={22} vb={22}><path d="M11 .7h10.300V11A10.300 10.300 0 1 1 11 .7z" fill="#dfe4ec" stroke="#8d949c" /><circle cx="11" cy="11" r="8.500" fill="#eef0f3" /><circle cx="11" cy="11" r="5.300" fill="#f5f6f8" stroke="#8d949c" /><path d="M7 15l-3 3M15 15l3 3" stroke="#8d949c" /></Ico></div>
      <div className="mt-2 flex"><Caret s={5} c="#777" /></div>
      <div className="mt-1 h-px w-[26px] bg-[#b5b5b5]" />
      <div className="mt-2"><Ico s={17} vb={17}><path d="M.7.700h10.500v10.500H.700z" fill="#b5d3a3" stroke="#7fa46b" /><circle cx="11" cy="11" r="3.500" fill="#f4f4f4" stroke="#999" /><path d="M13.500 13.500l3 3" stroke="#999" strokeWidth="1.500" /></Ico></div>
      <div className="mt-[9px] flex"><Caret s={5} c="#777" /></div>
      <div className="mt-auto flex w-full justify-end pr-0.5 pb-0.5"><Ico s={9} vb={9}><circle cx="4.500" cy="4.500" r="3.700" fill="#eee" stroke="#aaa" strokeWidth="1.300" /><path d="M2.500 3.500h4L4.500 6z" fill="#999" /></Ico></div>
    </div>
  );
}

/* ---------- view control bar ---------- */
const bulb = (x: number, y: number) => <path d={`M${x - 1} ${y + 6}v-2.500a3.300 3.300 0 1 1 2 0v2.500z`} fill="#cfe6fa" stroke={B} />;
const redX = <path d="M8 8l7 7M15 8l-7 7" stroke="#c0201c" strokeWidth="2" />;

const viewIcons: Item[] = [
  [319.500, 58, <Lbl className="scale-x-[.9] text-[#222]">1/2" = 1'-0"</Lbl>],
  [367, 16, <Ico s={16} vb={16}><rect x=".5" y="2" width="15" height="11.500" fill="#fff" stroke={K} /><path d="M1 4h14M1 8h14M1 12h14" stroke="#777" strokeWidth="2" strokeDasharray="2 2" /><path d="M3 6h12M3 10h12" stroke="#777" strokeWidth="2" strokeDasharray="2 2" /></Ico>],
  [388, 16, <Ico s={16} vb={16}><path d="M1 6l4-4h10v7l-4 4.500H1z" fill="#8cc4ea" stroke={B} /><path d="M1 6h10v7.500M11 6l4-4" stroke={B} /></Ico>],
  [408, 16, <Ico s={16} vb={16}><circle cx="7" cy="7" r="4" fill="#fff2b8" stroke="#d59a1d" strokeWidth="1.300" /><path d="M7 0v2M0 7h2M2 2l1.500 1.500M12 2l-1.500 1.500M2 12l1.500-1.500" stroke="#d59a1d" strokeWidth="1.300" />{redX}</Ico>],
  [428, 14, <Ico s={15} vb={16}><path d="M6 10Q3 8 3.500 5 5 1.500 8 1.500T12.500 5Q13 8 10 10v3H6z" fill="#eee" stroke="#bbb" /><path d="M5 15h6" stroke="#ccc" /></Ico>],
  [450, 16, <Ico s={16} vb={16}><path d="M0 4l3 1V3h5l1 2 3-2M2 6l2 7h4l3-7z" fill="#f3f3f3" stroke={K} />{bulb(12.500, 7)}</Ico>],
  [471, 16, <Ico s={16} vb={16}><path d="M4 15V4h11" stroke={B} strokeWidth="2" /><path d="M0 9h4M7 8v7M7 8h7" stroke={K} />{redX}</Ico>],
  [492, 16, <Ico s={16} vb={16}><path d="M4 15V4h8" stroke={B} strokeWidth="2" /><path d="M0 9h4M7 8v7M7 8h4" stroke={K} />{bulb(12.500, 7)}</Ico>],
  [513, 16, <Ico s={16} vb={16}><path d="M2.500 6L7 1.500l4-.5 4 5-1 1M2.500 6v7L7 15v-6l4-3M1 7.500l3-5 4 6" fill="#fff" stroke={K} /><rect x="8.500" y="10" width="6" height="5" fill="#8fc3ae" stroke={K} /><path d="M10 10V8h3v2" stroke={K} /></Ico>],
  [534, 16, <Ico s={16} vb={16}><path d="M4 8Q1 6 .5 4.500T2.500 3M15 8q1-3-.5-5.500L12.500 2" stroke={K} /><circle cx="6" cy="9" r="2.600" fill="#dcecf8" stroke={K} /><circle cx="12" cy="10" r="2.600" fill="#dcecf8" stroke={K} /></Ico>],
  [555, 10, <Ico s={16} vb={16}>{bulb(8, 8)}</Ico>],
  [576, 16, <Ico s={16} vb={16}><path d="M2.500 3.500h11M2.500 13.500h5M2.500 3.500v10M13.500 3.500V7" stroke="#222" strokeWidth="1.400" /><path d="M.5 3.500h2v-2" stroke="#222" /><rect x="8.500" y="8.500" width="6" height="6" fill="#fff" stroke="#222" strokeDasharray="2 1" /><path d="M11 11h2v2h-2z" fill="#222" /></Ico>],
  [596, 16, <Ico s={16} vb={16}><path d="M3 5l4-3h7M3 5v9M3 5h7M6 5v9M10 5v4M3 9h7M14 2v5" stroke="#aaa" /><path d="M10 14h5" stroke="#aaa" /></Ico>],
  [618, 16, <Ico s={16} vb={16}><path d="M1 6h4v6H1z M5 5l2-2h7v8l-2 2H5z" fill="#e3e6ea" stroke={K} /><path d="M5 5h7v8M12 5l2-2M8 1h6M15 4v7" stroke={K} /></Ico>],
  [639, 16, <Ico s={16} vb={16}><path d="M0 3h16M2 1v13M14 1v6" stroke={K} /><path d="M2 12h7" stroke={K} strokeDasharray="2 1" /><rect x="9" y="9.500" width="6.500" height="5" fill="#666" stroke={K} /><path d="M10.500 9V7h3v2" stroke={K} /></Ico>],
];

const cursor = <path d="M8 5v9l2-1.800 1.500 3.300 1.300-.6-1.500-3.200H14z" fill="#fff" stroke="#222" strokeWidth=".9" />;

const statusIcons: Item[] = [
  [900, 18, <Ico s={19} vb={18}><path d="M5 6V3l3-2 6 1v5l-3 1z" fill="#b6dca4" stroke="#35803a" /><path d="M1 9l2-2h6v7l-2 3H1z" fill="#8cc4ea" stroke={B} /><path d="M1 9h6v8M7 9l2-2" stroke={B} /><path d="M11.500 8q-1.500 2 .5 3.500V17h2v-5.500q2-1.500.5-3.500v2h-2z" fill="#fff" stroke={K} /></Ico>],
  [1018, 204, <div className="flex h-[18px] w-full items-center justify-end bg-white pr-[3px]"><Chevron /></div>],
  [1136, 16, <Ico s={17} vb={16}><path d="M6 1h9v3l-3 3v3l-4 5H3l5-6V7L6 4z" fill="#b5b5b5" stroke="#8a8a8a" /></Ico>],
  [1154, 10, <Lbl>:0</Lbl>],
  [1190, 17, <Ico s={17} vb={16}><rect x="1" y="1" width="14" height="14" fill="#fff" stroke={K} strokeWidth="1.300" /><path d="M1 3.500h14" stroke={K} strokeWidth="1.500" /><path d="M3 6.500h3v2H3zM7 10h5M7 13h5M8 7h5M5 9v4h2" stroke={K} /></Ico>],
  [1215, 16, <Ico s={17} vb={16}><path d="M1 1h14v14H1z" fill="#a0a0a0" /><path d="M2 6h5V2l4 7 3 5-4-3H5z" fill="#c9c9c9" stroke="#8a8a8a" /></Ico>],
  [1334, 204, <div className="flex h-[18px] w-full items-center justify-between bg-white pr-[3px] pl-0.5 text-[#777]"><Lbl className="origin-left scale-x-[.92]">Main Model</Lbl><Chevron /></div>],
  [1672, 17, <Ico s={17} vb={16}><path d="M1 4q2-3 5 0h4q3-3 5 0 0 4-4 3H5Q1 8 1 4z" fill="#f2c14a" stroke="#a6761c" /><g>{cursor}</g></Ico>],
  [1698, 17, <Ico s={17} vb={16}><path d="M5 2h9L10 7H2zM3 8h8L9 13H0z" fill="#bfe1f7" stroke={B} /><g>{cursor}</g></Ico>],
  [1724, 17, <Ico s={17} vb={16}><path d="M3 1h8v3h-1v3h2v3H2V7h2V4H3zM7 10v5" fill="#f09a5a" stroke="#a9521c" /><g>{cursor}</g></Ico>],
  [1750, 17, <Ico s={17} vb={16}><path d="M2 4l7-3v10l-7 4z" fill="#8cc4ea" stroke={B} /><g>{cursor}</g></Ico>],
  [1776, 17, <Ico s={17} vb={16}><path d="M5 0v10M0 5h10M3.500 1.500L5 0l1.500 1.500M3.500 8.500L5 10l1.500-1.500M1.500 3.500L0 5l1.500 1.500M8.500 3.500L10 5" stroke="#222" /><g transform="translate(1.500 1)">{cursor}</g></Ico>],
  [1802, 15, <Ico s={15} vb={16}><circle cx="8" cy="8" r="5.500" stroke="#999" strokeWidth="3" strokeDasharray="2.500 1" /></Ico>],
  [1825, 16, <Ico s={17} vb={16}><path d="M1.500 1.500h13v2.500L10 9v6H6V9L1.500 4z" fill="#dfe4e9" stroke={K} /></Ico>],
  [1839, 10, <Lbl>:0</Lbl>],
];

export default function App() {
  return (
    <div className="flex h-[1080px] w-[1910px] flex-col overflow-hidden bg-[#eee] font-['Open_Sans','Noto_Sans',sans-serif] text-[12.500px] leading-4 text-[#333]">
      <header className="flex h-[29px] shrink-0 items-start bg-[#cbcbcb]">
        <Row items={qat} className="h-6 w-[872px] shrink-0" />
        <div className="flex h-5 w-[310px] shrink-0 items-center justify-center"><Lbl className="scale-x-[.925] text-[#444]">Autodesk Revit 2022 - Admix Container (1) - 3D View: {"{3D}"}</Lbl></div>
        <Row items={account} from={1182} className="h-[25px]" />
      </header>
      <Row items={tabs} className="h-5 shrink-0 bg-[#cbcbcb]" />
      <Ribbon />
      <div className="h-[26px] shrink-0" />

      <div className="flex h-[885px] shrink-0">
        <aside className="flex w-[278px] shrink-0 flex-col border-t-2 border-r-2 border-[#cbcbcb]">
          <Properties />
          <Browser />
        </aside>
        <main className="flex flex-1 flex-col bg-white">
          <div className="flex h-[22px] shrink-0 justify-between bg-[#cbcbcb]">
            <div className="mt-0.5 flex h-5 w-32 items-center bg-white pl-[5px] font-semibold text-[#333]">
              <House s={15} />
              <Lbl className="ml-2 scale-x-[.92]">{"{3D}"}</Lbl>
              <div className="mr-[5px] ml-auto"><XIcon /></div>
            </div>
            <div className="flex flex-col items-center gap-[2px] self-center pt-0.5"><div className="h-[1.5px] w-1.5 bg-[#333]" /><Caret s={6} /></div>
          </div>
          <div className="relative flex h-[845px] shrink-0">
            <Model />
            <div className="w-2.5 bg-[#f0f0f0]" />
            <NavBar />
          </div>
          <div className="ml-0.5 flex h-4 items-center bg-[#eee]">
            <Row from={280} items={viewIcons} />
            <div className="ml-[619px] h-[2px] w-[17px] bg-[#8a8a8a]" />
          </div>
        </main>
      </div>

      <footer className="flex h-6 shrink-0 items-center bg-[#cbcbcb] pt-0.5 text-[#222]">
        <div className="w-[880px]"><Lbl className="-ml-px origin-left scale-x-[.9]">Click to select, TAB for alternates, CTRL adds, SHIFT unselects.</Lbl></div>
        <Row from={880} items={statusIcons} className="h-[18px]" />
      </footer>
    </div>
  );
}
